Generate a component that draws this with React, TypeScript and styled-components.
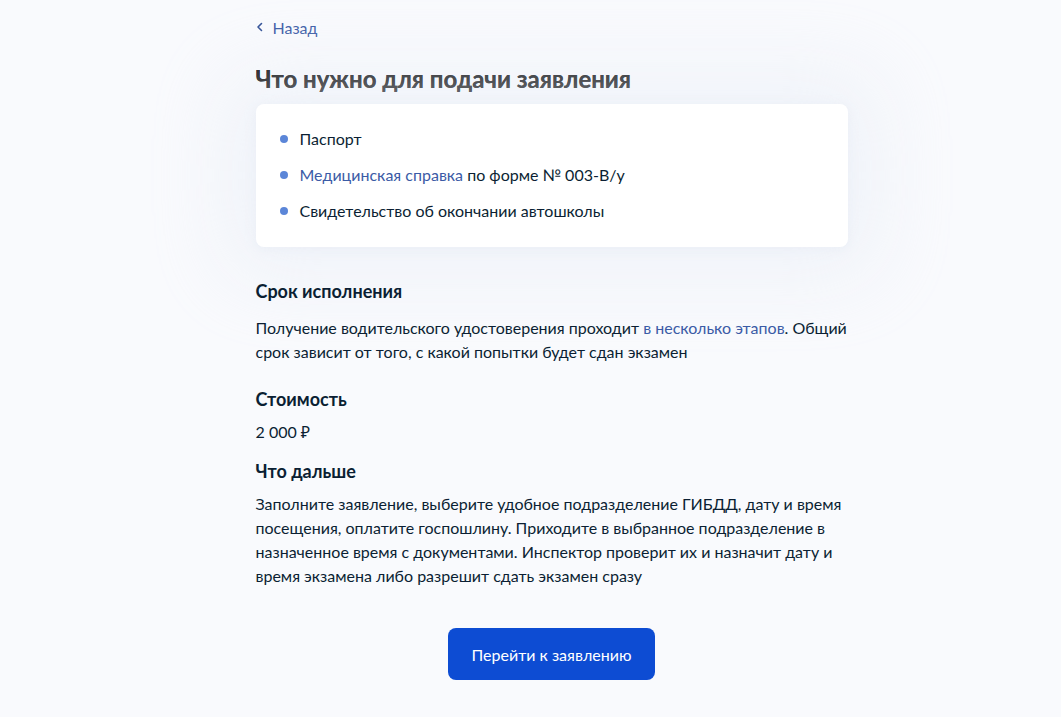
import React from "react";
import styled, { createGlobalStyle } from "styled-components";

const GlobalStyle = createGlobalStyle`
  html, body {
    margin: 0;
    padding: 0;
    background: #f9fafd;
  }
  body {
    font-family: Lato, "Noto Sans", sans-serif;
    color: #0b1f33;
    -webkit-font-smoothing: antialiased;
  }
`;

const Page = styled.div`
  min-height: 717px;
  display: flex;
  justify-content: center;
`;

const Column = styled.main`
  width: 592px;
  margin-left: 42px;
  padding-top: 17px;
  display: flex;
  flex-direction: column;
`;

const BackLink = styled.a`
  display: flex;
  align-items: center;
  gap: 10px;
  height: 20px;
  font-size: 16px;
  color: #3b5ba6;
  text-decoration: none;
  cursor: pointer;
`;

const Title = styled.h1`
  margin: 26px 0 0;
  font-size: 24px;
  line-height: 32px;
  font-weight: 700;
  color: #000;
  text-shadow: 0 0 0.6px #0b1f33;
`;

const Card = styled.div`
  margin-top: 9px;
  background: #fff;
  border-radius: 8px;
  padding: 23px 20px 24px;
  box-shadow: 0 0 80px 30px rgba(234, 238, 247, 0.6), 0 2px 12px rgba(200, 208, 224, 0.25);
`;

const List = styled.ul`
  margin: 0;
  padding: 0;
  list-style: none;
  display: flex;
  flex-direction: column;
  gap: 12px;
`;

const Item = styled.li`
  display: flex;
  align-items: center;
  gap: 12px;
  font-size: 16px;
  line-height: 24px;

  &::before {
    content: "";
    width: 8px;
    height: 8px;
    border-radius: 50%;
    background: #5b86d8;
    flex: none;
    margin-left: 4px;
  }
`;

const Link = styled.a`
  color: #3b5ba6;
  text-decoration: none;
  cursor: pointer;
`;

const Section = styled.section<{ $top: number; $gap: number }>`
  margin-top: ${(p) => p.$top}px;
  display: flex;
  flex-direction: column;
  gap: ${(p) => p.$gap}px;
`;

const Heading = styled.h2`
  margin: 0;
  font-size: 18px;
  line-height: 26px;
  font-weight: 700;
  color: #0b1f33;
`;

const Text = styled.p`
  margin: 0;
  font-size: 16px;
  line-height: 24px;
`;

const Actions = styled.div`
  margin-top: 40px;
  display: flex;
  justify-content: center;
`;

const Button = styled.button`
  height: 52px;
  padding: 0 24px;
  border: none;
  border-radius: 8px;
  background: #0d4cd3;
  color: #fff;
  font-family: inherit;
  font-size: 16px;
  cursor: pointer;
`;

const Chevron = () => (
  <svg width="7" height="10" viewBox="0 0 7 10" fill="none">
    <path d="M5.5 1.5L2 5L5.5 8.5" stroke="#2f4f96" strokeWidth="1.6" strokeLinecap="round" strokeLinejoin="round" />
  </svg>
);

export default function App() {
  return (
    <>
      <GlobalStyle />
      <Page>
        <Column>
          <BackLink>
            <Chevron />
            Назад
          </BackLink>
          <Title>Что нужно для подачи заявления</Title>
          <Card>
            <List>
              <Item>Паспорт</Item>
              <Item>
                <span>
                  <Link>Медицинская справка</Link> по форме № 003-В/у
                </span>
              </Item>
              <Item>Свидетельство об окончании автошколы</Item>
            </List>
          </Card>
          <Section $top={31} $gap={12}>
            <Heading>Срок исполнения</Heading>
            <Text>
              Получение водительского удостоверения проходит <Link>в несколько этапов</Link>. Общий
              срок зависит от того, с какой попытки будет сдан экзамен
            </Text>
          </Section>
          <Section $top={22} $gap={8}>
            <Heading>Стоимость</Heading>
            <Text>2 000 ₽</Text>
          </Section>
          <Section $top={14} $gap={8}>
            <Heading>Что дальше</Heading>
            <Text>
              Заполните заявление, выберите удобное подразделение ГИБДД, дату и время
              посещения, оплатите госпошлину. Приходите в выбранное подразделение в
              назначенное время с документами. Инспектор проверит их и назначит дату и
              время экзамена либо разрешит сдать экзамен сразу
            </Text>
          </Section>
          <Actions>
            <Button>Перейти к заявлению</Button>
          </Actions>
        </Column>
      </Page>
    </>
  );
}
